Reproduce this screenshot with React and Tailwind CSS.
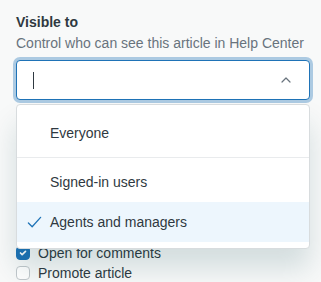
import React from 'react';

const font = { fontFamily: '"Liberation Sans", Arial, sans-serif' };

const CheckIcon = ({ className }) => (
  <svg viewBox="0 0 16 16" className={className} fill="none" stroke="currentColor" strokeWidth="1.4" strokeLinecap="round" strokeLinejoin="round">
    <path d="M1.5 8.5l4 4 9-10" />
  </svg>
);

const Checkbox = ({ checked, label }) => (
  <label className="flex items-center gap-2 h-5 text-[14px] text-[#2f3941]">
    <span
      className={
        checked
          ? 'w-[14px] h-[14px] rounded-[4px] bg-[#1f73b7] border border-[#1f73b7] flex items-center justify-center'
          : 'w-[14px] h-[14px] rounded-[4px] bg-white border border-[#c2c8cc]'
      }
    >
      {checked && (
        <svg viewBox="0 0 12 12" className="w-[10px] h-[10px]" fill="none" stroke="white" strokeWidth="2" strokeLinecap="round" strokeLinejoin="round">
          <path d="M3 6l2 2 4-4" />
        </svg>
      )}
    </span>
    {label}
  </label>
);

const Option = ({ label, selected }) => (
  <div className={`relative h-10 flex items-center pl-[33px] text-[14px] text-[#2f3941] ${selected ? 'bg-[#edf6fd]' : ''}`}>
    {selected && <CheckIcon className="absolute left-[10px] top-[13px] w-[15px] h-[15px] text-[#1f73b7]" />}
    {label}
  </div>
);

export default function App() {
  return (
    <div className="w-[321px] h-[282px] bg-[#f8f9f9] overflow-hidden" style={font}>
      <div className="pl-4 pr-[11px] pt-3">
        <div className="text-[14px] leading-5 font-semibold text-[#2f3941]">Visible to</div>
        <div className="text-[14px] leading-5 text-[#68737d] mt-[1px]">Control who can see this article in Help Center</div>

        <div className="relative mt-[7px]">
          <div className="h-10 bg-white border border-[#1f73b7] rounded-[4px] shadow-[0_0_0_3px_rgba(31,115,183,0.35)] flex items-center px-4">
            <span className="w-[1px] h-[17px] bg-[#2f3941]" />
            <svg viewBox="0 0 10 6" className="ml-auto mr-[2px] w-[10px] h-[6px]" fill="none" stroke="#68737d" strokeWidth="1.2" strokeLinecap="round" strokeLinejoin="round">
              <path d="M1 5l4-4 4 4" />
            </svg>
          </div>

          <div className="absolute left-0 right-0 top-[44px] z-10 bg-white border border-[#d8dcde] rounded-[4px] pt-2 pb-[6px] shadow-[0_20px_28px_0_rgba(4,68,77,0.15)]">
            <Option label="Everyone" />
            <div className="my-1 h-[1px] bg-[#e9ebed]" />
            <Option label="Signed-in users" />
            <Option label="Agents and managers" selected />
          </div>
        </div>

        <div className="mt-[143px] flex flex-col">
          <Checkbox checked label="Open for comments" />
          <Checkbox label="Promote article" />
        </div>
      </div>
    </div>
  );
}
